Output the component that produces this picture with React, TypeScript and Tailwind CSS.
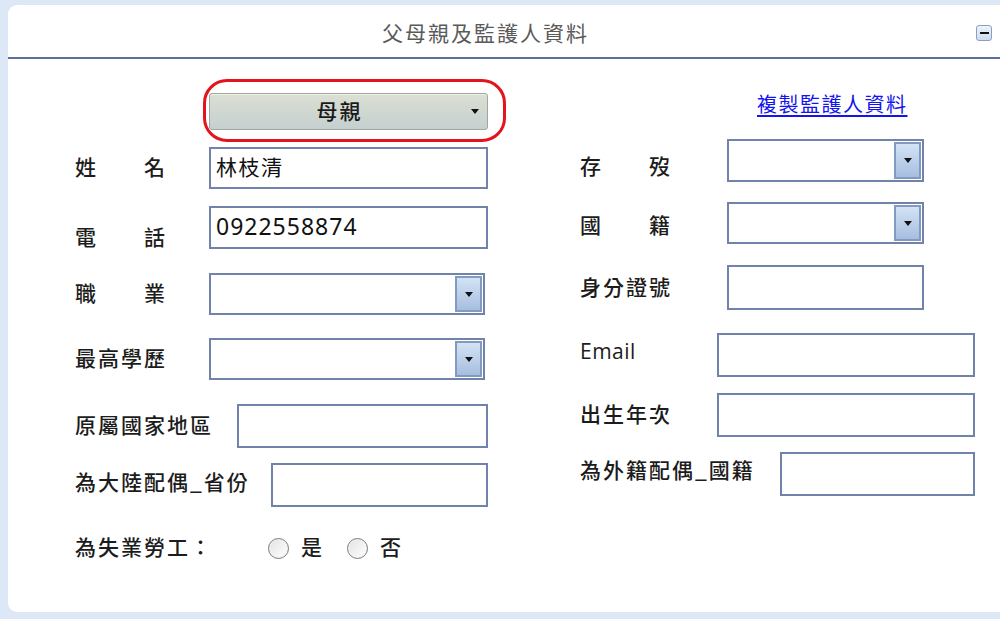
import type { ReactNode } from 'react';

const cjk = "font-['Noto_Sans_CJK_TC',sans-serif]";

function Caret() {
  return (
    <svg width="8" height="5" viewBox="0 0 8 5" aria-hidden>
      <path d="M0 0h8L4 5z" fill="#111" />
    </svg>
  );
}

function Label({ children, className = '' }: { children: ReactNode; className?: string }) {
  return (
    <span className={`-mt-[4px] shrink-0 text-[21px] font-medium leading-[24px] tracking-[2px] text-[#1c1c1c] ${className}`}>
      {children}
    </span>
  );
}

function TextBox({ value, className = '', textClass = '' }: { value?: string; className?: string; textClass?: string }) {
  return (
    <div className={`flex items-center border-2 border-[#7283ab] bg-white px-[5px] ${className}`}>
      <span className={`text-[#111] ${textClass}`}>{value}</span>
    </div>
  );
}

function SelectBox({ className = '' }: { className?: string }) {
  return (
    <div className={`flex justify-end border-2 border-[#7283ab] bg-white p-px ${className}`}>
      <div className="flex w-[27px] items-center justify-center border-2 border-[#8299c0] bg-gradient-to-b from-[#d3e3f5] to-[#a6bedf]">
        <Caret />
      </div>
    </div>
  );
}

function Radio({ label }: { label: string }) {
  return (
    <span className="flex items-center gap-[12px]">
      <span className="h-[21px] w-[21px] rounded-full border border-[#7a7a7a] bg-gradient-to-br from-[#e2e2e2] to-white shadow-[inset_0_0_0_1px_#f4f4f4]" />
      <span className="-mt-[4px] text-[21px] font-medium leading-[24px] text-[#1c1c1c]">{label}</span>
    </span>
  );
}

export default function App() {
  return (
    <div className={`h-[619px] w-[1000px] overflow-hidden bg-[#dce8f6] pb-[7px] pl-[8px] pt-[5px] ${cjk}`}>
      <div className="flex h-full flex-col rounded-l-[9px] bg-white">
        {/* header */}
        <div className="flex h-[54px] shrink-0 items-center border-b-2 border-[#5a6f9c] pt-[1px]">
          <div className="flex-1 text-center text-[21px] leading-[24px] tracking-[2px] text-[#5a5a5a]">
            父母親及監護人資料
          </div>
          <div className="ml-[13px] mr-[8px] mt-[2px] flex h-[16px] w-[16px] items-center justify-center rounded-[3px] border border-[#8aa0c2] bg-gradient-to-b from-[#eef4fb] to-[#cddcee]">
            <span className="h-[2px] w-[9px] bg-[#111]" />
          </div>
        </div>

        {/* body */}
        <div className="flex pl-[67px]">
          {/* left column */}
          <div className="flex w-[505px] shrink-0 flex-col">
            <div className="ml-[128px] mt-[20px] w-[303px] rounded-[24px] border-[3px] border-[#e3141d] pb-[9px] pl-[3px] pr-[15px] pt-[11px]">
              <button className="flex h-[37px] w-full items-center rounded-[3px] border border-[#9ea69f] bg-gradient-to-b from-[#dcdfd3] to-[#c5d0cf] shadow-[inset_0_1px_0_#eef0e8]">
                <span className="-mt-[3px] flex-1 pl-[6px] text-center text-[21px] font-medium leading-[24px] tracking-[2px] text-[#1a1a1a]">母親</span>
                <span className="flex w-[24px] justify-center">
                  <Caret />
                </span>
              </button>
            </div>

            <div className="mt-[5px] flex items-center">
              <Label className="w-[134px]">姓　　名</Label>
              <TextBox value="林枝清" className="h-[42px] w-[279px]" textClass="-mt-[4px] text-[21px] tracking-[1.5px] leading-[24px]" />
            </div>
            <div className="mt-[17px] flex items-center">
              <Label className="w-[134px] pt-[20px]">電　　話</Label>
              <TextBox
                value="0922558874"
                className="h-[43px] w-[279px]"
                textClass="font-['Noto_Sans',sans-serif] text-[23px] tracking-[1px] leading-[26px] -mt-[4px]"
              />
            </div>
            <div className="mt-[24px] flex items-center">
              <Label className="w-[134px]">職　　業</Label>
              <SelectBox className="h-[42px] w-[276px]" />
            </div>
            <div className="mt-[23px] flex items-center">
              <Label className="w-[134px]">最高學歷</Label>
              <SelectBox className="h-[42px] w-[276px]" />
            </div>
            <div className="mt-[24px] flex items-center">
              <Label className="w-[162px]">原屬國家地區</Label>
              <TextBox className="h-[44px] w-[251px]" />
            </div>
            <div className="mt-[15px] flex items-center">
              <Label className="w-[196px] pb-[4px]">為大陸配偶_省份</Label>
              <TextBox className="h-[44px] w-[217px]" />
            </div>
            <div className="mt-[29px] flex h-[24px] items-center">
              <Label className="w-[193px]">為失業勞工：</Label>
              <div className="flex items-center gap-[25px]">
                <Radio label="是" />
                <Radio label="否" />
              </div>
            </div>
          </div>

          {/* right column */}
          <div className="flex flex-1 flex-col">
            <div className="ml-[177px] mt-[33px] h-[24px]">
              <a href="#" className="text-[20px] leading-[24px] tracking-[1.5px] text-[#1414f0] underline underline-offset-[3px]">
                複製監護人資料
              </a>
            </div>
            <div className="mt-[23px] flex items-center">
              <Label className="w-[147px] pt-[13px]">存　　歿</Label>
              <SelectBox className="h-[43px] w-[197px]" />
            </div>
            <div className="mt-[20px] flex items-center">
              <Label className="w-[147px] pt-[6px]">國　　籍</Label>
              <SelectBox className="h-[42px] w-[197px]" />
            </div>
            <div className="mt-[21px] flex items-center">
              <Label className="w-[147px]">身分證號</Label>
              <TextBox className="h-[45px] w-[197px]" />
            </div>
            <div className="mt-[23px] flex items-center">
              <span className="-mt-[8px] w-[137px] shrink-0 font-['Open_Sans',sans-serif] text-[21px] leading-[24px] tracking-[0.5px] text-[#1c1c1c]">
                Email
              </span>
              <TextBox className="h-[44px] w-[258px]" />
            </div>
            <div className="mt-[16px] flex items-center">
              <Label className="w-[137px]">出生年次</Label>
              <TextBox className="h-[44px] w-[258px]" />
            </div>
            <div className="mt-[15px] flex items-center">
              <Label className="w-[200px] pb-[6px]">為外籍配偶_國籍</Label>
              <TextBox className="h-[44px] w-[195px]" />
            </div>
          </div>
        </div>
      </div>
    </div>
  );
}
